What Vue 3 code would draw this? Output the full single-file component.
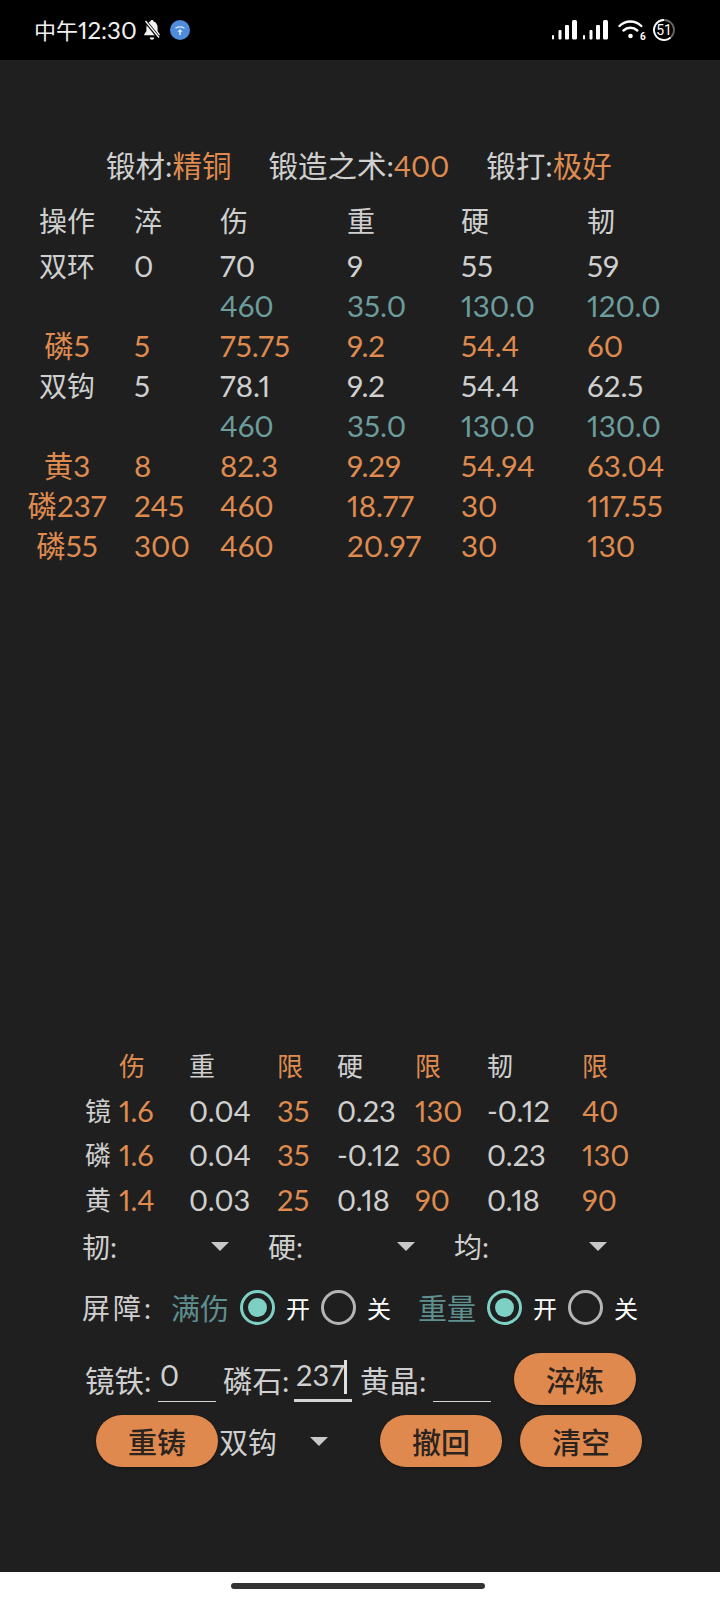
<script setup>
const forge = [
  ['锻材:', '精铜', false],
  ['锻造之术:', '400', true],
  ['锻打:', '极好', false],
]
const rows = [
  { kind: 'head', cells: ['操作', '淬', '伤', '重', '硬', '韧'] },
  { kind: 'plain', cells: ['双环', '0', '70', '9', '55', '59'] },
  { kind: 'teal', cells: ['', '', '460', '35.0', '130.0', '120.0'] },
  { kind: 'orange', cells: ['磷5', '5', '75.75', '9.2', '54.4', '60'] },
  { kind: 'plain', cells: ['双钩', '5', '78.1', '9.2', '54.4', '62.5'] },
  { kind: 'teal', cells: ['', '', '460', '35.0', '130.0', '130.0'] },
  { kind: 'orange', cells: ['黄3', '8', '82.3', '9.29', '54.94', '63.04'] },
  { kind: 'orange', cells: ['磷237', '245', '460', '18.77', '30', '117.55'] },
  { kind: 'orange', cells: ['磷55', '300', '460', '20.97', '30', '130'] },
]
const coef = [
  ['', '伤', '重', '限', '硬', '限', '韧', '限'],
  ['镜', '1.6', '0.04', '35', '0.23', '130', '-0.12', '40'],
  ['磷', '1.6', '0.04', '35', '-0.12', '30', '0.23', '130'],
  ['黄', '1.4', '0.03', '25', '0.18', '90', '0.18', '90'],
]
const orangeCols = [1, 3, 5, 7]
const selects = ['韧:', '硬:', '均:']
const radios = [
  { label: '满伤', cls: 'r1' },
  { label: '重量', cls: 'r2' },
]
const isNum = (s) => /^[-\d.]+$/.test(s)
</script>

<template>
  <div class="screen">
    <header class="status">
      <div class="status-left">
        <span class="clock"><span class="clock-cjk">中午</span>12:30</span>
        <svg class="bell" width="18" height="22" viewBox="0 0 18 22">
          <path d="M9 1c.9 0 1.500.6 1.600 1.400 2.700.8 4 3.100 4 5.900v4l2.200 3v1H1.200v-1l2.200-3v-4c0-2.800 1.300-5.100 4-5.900C7.500 1.600 8.100 1 9 1z" fill="#f2f2f2"/>
          <path d="M6.800 18.500h4.400c0 1.300-1 2.300-2.200 2.300s-2.200-1-2.200-2.300z" fill="#f2f2f2"/>
          <path d="M1.500 1l14.500 18" stroke="#000" stroke-width="3.400"/>
          <path d="M2.500 2l13.500 16.500" stroke="#f2f2f2" stroke-width="1.400"/>
        </svg>
        <svg class="hot" width="20" height="20" viewBox="0 0 20 20">
          <circle cx="10" cy="10" r="10" fill="#4f8ddc"/>
          <path d="M5.500 8.200c2.800-1.700 6.200-1.700 9 0" stroke="#dbe8f8" stroke-width="1.300" fill="none"/>
          <path d="M10 9l2.500 2.800h-1.700V15H9.200v-3.200H7.500z" fill="#dbe8f8"/>
        </svg>
      </div>
      <div class="status-right">
        <svg class="sig" width="25" height="20" viewBox="0 0 25 20"><g fill="#fff"><rect x="0" y="15" width="2" height="4.500" rx="1"/><rect x="6.500" y="10" width="3" height="9.500" rx="1"/><rect x="13" y="5" width="4" height="14.500" rx="1"/><rect x="20" y="0" width="5" height="19.500" rx="1.500"/></g></svg>
        <svg class="sig" width="25" height="20" viewBox="0 0 25 20"><g fill="#fff"><rect x="0" y="15" width="2" height="4.500" rx="1"/><rect x="6.500" y="10" width="3" height="9.500" rx="1"/><rect x="13" y="5" width="4" height="14.500" rx="1"/><rect x="20" y="0" width="5" height="19.500" rx="1.500"/></g></svg>
        <svg class="wifi" width="28" height="22" viewBox="0 0 28 22">
          <path d="M1.500 7c6.300-6 15.500-6 21.800 0M5.500 11.500c4-3.700 9.800-3.700 13.800 0" stroke="#fff" stroke-width="2.400" fill="none" stroke-linecap="round"/>
          <circle cx="12.500" cy="17" r="2.300" fill="#fff"/>
          <text x="22" y="21" class="wifi6">6</text>
        </svg>
        <svg class="batt-ic" width="24" height="24" viewBox="0 0 24 24">
          <circle cx="12" cy="12" r="10" stroke="#666" stroke-width="1.800" fill="none"/>
          <path d="M18.500 19.600A10 10 0 1 1 12 2" stroke="#fff" stroke-width="1.800" fill="none"/>
          <text x="12" y="17" text-anchor="middle" class="batt">51</text>
        </svg>
      </div>
    </header>

    <main class="body">
      <div class="forge">
        <span v-for="f in forge" :key="f[0]" class="forge-item">{{ f[0] }}<em :class="{ big: f[2] }">{{ f[1] }}</em></span>
      </div>

      <div class="table">
        <div v-for="(r, i) in rows" :key="i" class="trow" :class="r.kind">
          <span v-for="(c, j) in r.cells" :key="j" class="tcell" :class="{ num: isNum(c) }">{{ c }}</span>
        </div>
      </div>

      <div class="spacer"></div>

      <div class="coef">
        <div v-for="(r, i) in coef" :key="i" class="crow">
          <span v-for="(c, j) in r" :key="j" :class="{ orange: orangeCols.includes(j), num: isNum(c) }">{{ c }}</span>
        </div>
      </div>

      <div class="selects">
        <div v-for="s in selects" :key="s" class="sel">
          <span>{{ s }}</span><i class="arrow"></i>
        </div>
      </div>

      <div class="radios">
        <span class="rlabel">屏障:</span>
        <div v-for="r in radios" :key="r.label" class="rgroup" :class="r.cls">
          <span class="rname">{{ r.label }}</span>
          <span class="radio on"></span><span class="ropt">开</span>
          <span class="radio"></span><span class="ropt">关</span>
        </div>
      </div>

      <div class="inputs">
        <span class="ilabel">镜铁:</span>
        <span class="field">0</span>
        <span class="ilabel second">磷石:</span>
        <span class="field focus">237<i class="caret"></i></span>
        <span class="ilabel third">黄晶:</span>
        <span class="field"></span>
        <button class="btn quench">淬炼</button>
      </div>

      <div class="actions">
        <button class="btn">重铸</button>
        <div class="sel2"><span>双钩</span><i class="arrow"></i></div>
        <button class="btn undo">撤回</button>
        <button class="btn clear">清空</button>
      </div>
    </main>

    <footer class="nav"><span class="pill"></span></footer>
  </div>
</template>

<style>
html, body { margin: 0; background: #fff; }
</style>

<style scoped>
.screen {
  width: 720px;
  height: 1600px;
  display: flex;
  flex-direction: column;
  font-family: Lato, "Noto Sans CJK SC", sans-serif;
  font-weight: 400;
  font-variant-numeric: proportional-nums;
  color: #cfcfcf;
  overflow: hidden;
}
.status {
  height: 60px;
  background: #000;
  display: flex;
  justify-content: space-between;
  align-items: center;
  padding: 6px 44px 6px 34px;
  box-sizing: border-box;
}
.status-left, .status-right { display: flex; align-items: center; }
.status-left { gap: 6px; }
.clock { font-size: 24px; font-weight: 400; color: #f0f0f0; line-height: 28px; }
.clock-cjk { font-size: 22px; }
.hot { margin-left: 3px; }
.sig { margin-right: 6px; }
.wifi { margin-left: 4px; margin-right: 6px; }
.wifi6 { font: 700 10px Roboto, sans-serif; fill: #fff; }
.batt { font: 400 14px Roboto, sans-serif; fill: #fff; }
.body {
  flex: 1;
  background: #1f1f1f;
  display: flex;
  flex-direction: column;
}
.forge {
  margin-top: 86px;
  height: 40px;
  line-height: 40px;
  display: flex;
  align-items: center;
  padding-left: 106px;
  font-size: 29.500px;
  gap: 37px;
}
.forge em { font-style: normal; color: #df8b50; }
.forge em.big { font-size: 29px; }
.table { margin-top: 14px; padding-left: 10px; }
.trow {
  display: grid;
  grid-template-columns: 124px 86px 127px 114px 126px 1fr;
  height: 40px;
  line-height: 40px;
  font-size: 28px;
}
.trow.head { height: 46px; line-height: 42px; }
.tcell.num { font-size: 29.500px; }
.tcell:first-child { text-align: center; padding-right: 10px; }
.trow.orange .tcell:first-child { font-size: 29.500px; }
.teal { color: #6d9c9c; }
.orange { color: #df8b50; }
.spacer { flex: 1; }
.coef { padding-left: 85px; }
.crow {
  display: grid;
  grid-template-columns: 34px 70px 88px 60px 78px 72px 95px 1fr;
  height: 44.500px;
  line-height: 44.500px;
  font-size: 26px;
}
.crow .num { font-size: 29px; }
.selects {
  display: grid;
  grid-template-columns: 186px 186px 1fr;
  padding-left: 82px;
  height: 44px;
  margin-top: 2px;
  font-size: 28px;
  width: 530px;
}
.sel { display: flex; align-items: center; justify-content: space-between; width: 147px; }
.sel:nth-child(3) { width: 153px; }
.arrow {
  width: 0;
  height: 0;
  border-left: 9px solid transparent;
  border-right: 9px solid transparent;
  border-top: 9px solid #c8c8c8;
  display: block;
}
.radios {
  margin-top: 16px;
  height: 46px;
  padding-left: 82px;
  display: flex;
  align-items: center;
  font-size: 28px;
}
.rlabel { width: 89px; letter-spacing: 3px; }
.rgroup { display: flex; align-items: center; }
.r2 { margin-left: 27px; }
.rname { width: 58px; color: #5f8f8f; font-size: 29px; }
.radio {
  width: 35px;
  height: 35px;
  border-radius: 50%;
  border: 3.500px solid #b5b5b5;
  box-sizing: border-box;
  margin-left: 11px;
  position: relative;
}
.radio.on { border-color: #7fd0c4; }
.radio.on::after {
  content: "";
  position: absolute;
  inset: 5px;
  border-radius: 50%;
  background: #7fd0c4;
}
.ropt { width: 24px; padding-left: 11px; font-size: 24px; color: #fff; }
.radio + .ropt + .radio { margin-left: 11px; }
.inputs {
  margin-top: 22px;
  padding-left: 85px;
  height: 54px;
  display: flex;
  align-items: center;
  font-size: 29.500px;
}
.ilabel { width: 73px; }
.second { margin-left: 7px; width: 71px; }
.third { margin-left: 8px; width: 73px; }
.field {
  width: 58px;
  height: 48px;
  line-height: 42px;
  border-bottom: 1.500px solid #d4d4d4;
  box-sizing: border-box;
  padding-left: 2px;
  position: relative;
  margin-top: -2px;
  font-size: 29px;
}
.focus { border-bottom: 3px solid #d4d4d4; }
.caret {
  position: absolute;
  left: 50px;
  top: 6px;
  width: 2.500px;
  height: 34px;
  background: #e0e0e0;
}
.btn {
  width: 122px;
  height: 52px;
  border: none;
  border-radius: 26px;
  background: #e0894e;
  color: #2b241e;
  font-family: inherit;
  font-size: 29px;
  font-weight: 500;
  padding: 0;
  box-shadow: 0 1px 3px rgba(0, 0, 0, .4);
}
.quench { margin-left: 23px; }
.actions {
  margin-top: 8px;
  margin-bottom: 104px;
  padding-left: 96px;
  height: 54px;
  display: flex;
  align-items: center;
  font-size: 29px;
}
.sel2 {
  width: 119px;
  display: flex;
  align-items: center;
  gap: 33px;
  margin-left: 1px;
}
.undo { margin-left: 42px; }
.clear { margin-left: 18px; }
.nav {
  height: 28px;
  background: #fff;
  display: flex;
  justify-content: center;
  align-items: center;
}
.pill {
  width: 254px;
  height: 6px;
  border-radius: 3px;
  background: #333;
  margin-left: -4px;
}
</style>
